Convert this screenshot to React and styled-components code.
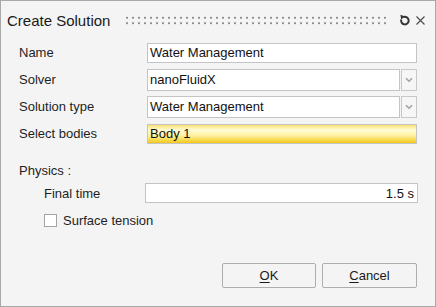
import React, { useState } from 'react';
import styled, { createGlobalStyle } from 'styled-components';

const GlobalStyle = createGlobalStyle`
  html, body {
    margin: 0;
    padding: 0;
    background: #f4f4f4;
  }
  body {
    font-family: "Liberation Sans", Arial, sans-serif;
  }
`;

const Dialog = styled.div`
  width: 436px;
  height: 307px;
  box-sizing: border-box;
  border: 1px solid #a8a8a8;
  background: #f4f4f4;
  display: flex;
  flex-direction: column;
  color: #1e1e1e;
  font-size: 13px;
`;

const Header = styled.div`
  height: 38px;
  display: flex;
  align-items: center;
  padding: 0 10px 0 6px;
`;

const Title = styled.div`
  font-size: 15px;
  color: #1a1a1a;
  white-space: nowrap;
`;

const Grip = styled.div`
  flex: 1;
  height: 9px;
  margin: 0 10px 0 16px;
  background-image: radial-gradient(circle, #8e8e8e 1px, transparent 1.3px);
  background-size: 6px 5.5px;
  background-position: -2px -1px;
`;

const IconButton = styled.button`
  border: none;
  background: none;
  padding: 0;
  margin-left: ${p => p.$gap || 0}px;
  display: flex;
  cursor: pointer;
`;

const Body = styled.div`
  flex: 1;
  display: flex;
  flex-direction: column;
  padding: 0 18px 18px 18px;
`;

const FormGrid = styled.div`
  display: grid;
  grid-template-columns: ${p => p.$label}px 1fr;
  grid-auto-rows: ${p => p.$row}px;
  align-items: center;
  padding-left: ${p => p.$indent || 0}px;
`;

const Label = styled.div`
  white-space: nowrap;
`;

const TextField = styled.div`
  height: ${p => p.$h || 20}px;
  box-sizing: border-box;
  border: 1px solid #c4c4c4;
  background: ${p => p.$highlight
    ? 'linear-gradient(to bottom, #f9e270 0%, #fffbd6 28%, #fff3a0 58%, #f4c81a 100%)'
    : '#ffffff'};
  display: flex;
  align-items: center;
  justify-content: ${p => p.$right ? 'flex-end' : 'flex-start'};
  padding: 0 3px 0 2px;
  font-size: 13px;
  color: #111;
  white-space: nowrap;
  overflow: hidden;
`;

const SelectWrap = styled.div`
  display: flex;
  gap: 1px;
  height: 22px;
`;

const SelectBox = styled(TextField)`
  flex: 1;
  height: 22px;
`;

const ArrowBox = styled.div`
  width: 16px;
  box-sizing: border-box;
  border: 1px solid #c8c8c8;
  background: #f6f6f6;
  display: flex;
  align-items: center;
  justify-content: center;
`;

const SectionTitle = styled.div`
  margin-top: 13px;
  height: 21px;
  display: flex;
  align-items: center;
`;

const CheckRow = styled.label`
  margin-top: 2px;
  height: 26px;
  display: flex;
  align-items: center;
  gap: 6px;
  padding-left: 25px;
`;

const CheckBox = styled.span`
  width: 13px;
  height: 13px;
  box-sizing: border-box;
  border: 1px solid #a3a3a3;
  background: ${p => p.$on ? '#dbe9f7' : '#fff'};
`;

const Footer = styled.div`
  margin-top: auto;
  display: flex;
  justify-content: flex-end;
  gap: 6px;
`;

const Button = styled.button`
  width: ${p => p.$w}px;
  height: 25px;
  box-sizing: border-box;
  border: 1px solid #adadad;
  border-radius: 2px;
  background: #f4f4f4;
  font-family: "Liberation Sans", Arial, sans-serif;
  font-size: 13px;
  color: #1a1a1a;
  padding: 0;
  cursor: pointer;

  u {
    text-underline-offset: 2px;
  }
`;

const ResetIcon = () => (
  <svg width="12" height="12" viewBox="0 0 12 12">
    <path d="M4.6 3.0 A3.8 3.8 0 1 1 2.2 5.6" fill="none" stroke="#333" strokeWidth="2" />
    <polygon points="1.4,0.8 6.0,2.4 2.2,5.6" fill="#333" />
  </svg>
);

const CloseIcon = () => (
  <svg width="9" height="9" viewBox="0 0 9 9">
    <path d="M0.5 0.5 L8.5 8.5 M8.5 0.5 L0.5 8.5" stroke="#4a4a4a" strokeWidth="1.1" />
  </svg>
);

const ChevronDown = () => (
  <svg width="8" height="6" viewBox="0 0 8 6">
    <path d="M1 1.2 L4 4.2 L7 1.2" fill="none" stroke="#a2a2a2" strokeWidth="1.6" />
  </svg>
);

const Select = ({ value }) => (
  <SelectWrap>
    <SelectBox>{value}</SelectBox>
    <ArrowBox><ChevronDown /></ArrowBox>
  </SelectWrap>
);

export default function App() {
  const [surface, setSurface] = useState(false);

  return (
    <>
      <GlobalStyle />
      <Dialog>
        <Header>
          <Title>Create Solution</Title>
          <Grip />
          <IconButton><ResetIcon /></IconButton>
          <IconButton $gap={5}><CloseIcon /></IconButton>
        </Header>

        <Body>
          <FormGrid $label={128} $row={27}>
            <Label>Name</Label>
            <TextField>Water Management</TextField>
            <Label>Solver</Label>
            <Select value="nanoFluidX" />
            <Label>Solution type</Label>
            <Select value="Water Management" />
            <Label>Select bodies</Label>
            <TextField $highlight>Body 1</TextField>
          </FormGrid>

          <SectionTitle>Physics :</SectionTitle>
          <FormGrid $label={101} $row={24} $indent={25}>
            <Label>Final time</Label>
            <TextField $right style={{ marginRight: -1 }}>1.5 s</TextField>
          </FormGrid>
          <CheckRow onClick={() => setSurface(!surface)}>
            <CheckBox $on={surface} />
            Surface tension
          </CheckRow>

          <Footer>
            <Button $w={94}><u>O</u>K</Button>
            <Button $w={95}><u>C</u>ancel</Button>
          </Footer>
        </Body>
      </Dialog>
    </>
  );
}
